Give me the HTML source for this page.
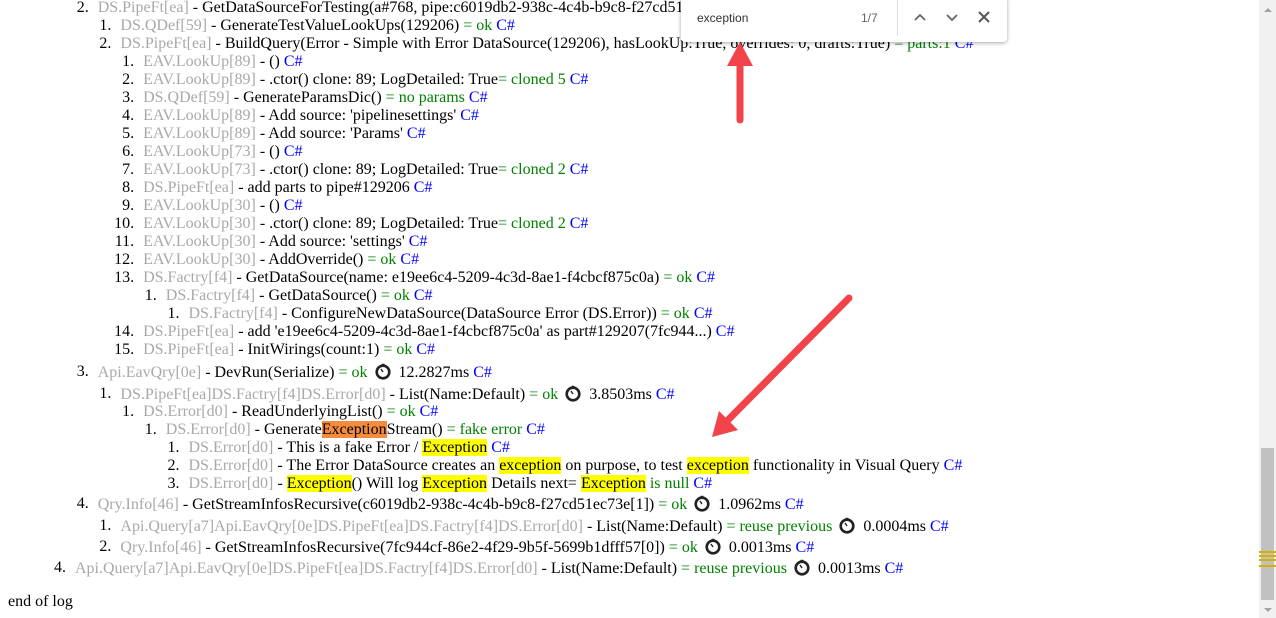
<!DOCTYPE html>
<html><head><meta charset="utf-8"><style>
body{margin:0;width:1276px;height:618px;overflow:hidden;background:#fff;font-family:"Liberation Serif",serif;font-size:16px;color:#000;position:relative}
.l{position:absolute;white-space:nowrap;line-height:18px;height:18px}
.n{position:absolute;width:30px;text-align:right}
.g{color:#a9a9a9}.k{color:#008000}.c{color:#0000ff}
.y{background:#ffff00}.o{background:#f58b3c}
.clk{display:inline-block;vertical-align:-3px;margin:0 4px 0 3px}
</style></head><body>
<svg width="0" height="0" style="position:absolute"><defs><symbol id="ck" viewBox="0 0 16 16"><circle cx="8" cy="8.5" r="6.3" fill="#fff" stroke="#222" stroke-width="2.6"/><rect x="6.5" y="0.3" width="3" height="2" fill="#222"/><path d="M8 8.5 L6 5.5" stroke="#222" stroke-width="1.4"/></symbol></defs></svg>
<div id="c"></div>
<script>
const L=[
[7,1,2,'<span class="g">DS.PipeFt[ea]</span> - GetDataSourceForTesting(a#768, pipe:c6019db2-938c-4c4b-b9c8-f27cd51ec73e)'],
[25,2,1,'<span class="g">DS.QDef[59]</span> - GenerateTestValueLookUps(129206) <span class="k">= ok</span> <span class="c">C#</span>'],
[43,2,2,'<span class="g">DS.PipeFt[ea]</span> - BuildQuery(Error - Simple with Error DataSource(129206), hasLookUp:True, overrides: 0, drafts:True) <span class="k">= parts:1</span> <span class="c">C#</span>'],
[61,3,1,'<span class="g">EAV.LookUp[89]</span> - () <span class="c">C#</span>'],
[79,3,2,'<span class="g">EAV.LookUp[89]</span> - .ctor() clone: 89; LogDetailed: True<span class="k">= cloned 5</span> <span class="c">C#</span>'],
[97,3,3,'<span class="g">DS.QDef[59]</span> - GenerateParamsDic() <span class="k">= no params</span> <span class="c">C#</span>'],
[115,3,4,'<span class="g">EAV.LookUp[89]</span> - Add source: \'pipelinesettings\' <span class="c">C#</span>'],
[133,3,5,'<span class="g">EAV.LookUp[89]</span> - Add source: \'Params\' <span class="c">C#</span>'],
[151,3,6,'<span class="g">EAV.LookUp[73]</span> - () <span class="c">C#</span>'],
[169,3,7,'<span class="g">EAV.LookUp[73]</span> - .ctor() clone: 89; LogDetailed: True<span class="k">= cloned 2</span> <span class="c">C#</span>'],
[187,3,8,'<span class="g">DS.PipeFt[ea]</span> - add parts to pipe#129206 <span class="c">C#</span>'],
[205,3,9,'<span class="g">EAV.LookUp[30]</span> - () <span class="c">C#</span>'],
[223,3,10,'<span class="g">EAV.LookUp[30]</span> - .ctor() clone: 89; LogDetailed: True<span class="k">= cloned 2</span> <span class="c">C#</span>'],
[241,3,11,'<span class="g">EAV.LookUp[30]</span> - Add source: \'settings\' <span class="c">C#</span>'],
[259,3,12,'<span class="g">EAV.LookUp[30]</span> - AddOverride() <span class="k">= ok</span> <span class="c">C#</span>'],
[277,3,13,'<span class="g">DS.Factry[f4]</span> - GetDataSource(name: e19ee6c4-5209-4c3d-8ae1-f4cbcf875c0a) <span class="k">= ok</span> <span class="c">C#</span>'],
[295,4,1,'<span class="g">DS.Factry[f4]</span> - GetDataSource() <span class="k">= ok</span> <span class="c">C#</span>'],
[313,5,1,'<span class="g">DS.Factry[f4]</span> - ConfigureNewDataSource(DataSource Error (DS.Error)) <span class="k">= ok</span> <span class="c">C#</span>'],
[331,3,14,'<span class="g">DS.PipeFt[ea]</span> - add \'e19ee6c4-5209-4c3d-8ae1-f4cbcf875c0a\' as part#129207(7fc944...) <span class="c">C#</span>'],
[349,3,15,'<span class="g">DS.PipeFt[ea]</span> - InitWirings(count:1) <span class="k">= ok</span> <span class="c">C#</span>'],
[371,1,3,'<span class="g">Api.EavQry[0e]</span> - DevRun(Serialize) <span class="k">= ok</span> CLK 12.2827ms <span class="c">C#</span>'],
[393,2,1,'<span class="g">DS.PipeFt[ea]DS.Factry[f4]DS.Error[d0]</span> - List(Name:Default) <span class="k">= ok</span> CLK 3.8503ms <span class="c">C#</span>'],
[411,3,1,'<span class="g">DS.Error[d0]</span> - ReadUnderlyingList() <span class="k">= ok</span> <span class="c">C#</span>'],
[429,4,1,'<span class="g">DS.Error[d0]</span> - Generate<span class="o">Exception</span>Stream() <span class="k">= fake error</span> <span class="c">C#</span>'],
[447,5,1,'<span class="g">DS.Error[d0]</span> - This is a fake Error / <span class="y">Exception</span> <span class="c">C#</span>'],
[465,5,2,'<span class="g">DS.Error[d0]</span> - The Error DataSource creates an <span class="y">exception</span> on purpose, to test <span class="y">exception</span> functionality in Visual Query <span class="c">C#</span>'],
[483,5,3,'<span class="g">DS.Error[d0]</span> - <span class="y">Exception</span>() Will log <span class="y">Exception</span> Details next= <span class="y">Exception</span> <span class="k">is null</span> <span class="c">C#</span>'],
[503,1,4,'<span class="g">Qry.Info[46]</span> - GetStreamInfosRecursive(c6019db2-938c-4c4b-b9c8-f27cd51ec73e[1]) <span class="k">= ok</span> CLK 1.0962ms <span class="c">C#</span>'],
[525,2,1,'<span class="g">Api.Query[a7]Api.EavQry[0e]DS.PipeFt[ea]DS.Factry[f4]DS.Error[d0]</span> - List(Name:Default) <span class="k">= reuse previous</span> CLK 0.0004ms <span class="c">C#</span>'],
[546,2,2,'<span class="g">Qry.Info[46]</span> - GetStreamInfosRecursive(7fc944cf-86e2-4f29-9b5f-5699b1dfff57[0]) <span class="k">= ok</span> CLK 0.0013ms <span class="c">C#</span>'],
[567,0,4,'<span class="g">Api.Query[a7]Api.EavQry[0e]DS.PipeFt[ea]DS.Factry[f4]DS.Error[d0]</span> - List(Name:Default) <span class="k">= reuse previous</span> CLK 0.0013ms <span class="c">C#</span>']
];
let h='';
for(const [y,d,n,t] of L){const x=75+23*d-0.3*d;
h+=`<div class="n l" style="top:${y-8}px;left:${x-39}px">${n}.</div><div class="l" style="top:${y-8}px;left:${x}px">${t.replace(/CLK/g,'<svg class="clk" width="16" height="17"><use href="#ck"/></svg>')}</div>`;}
h+='<div class="l" style="top:593px;left:8px">end of log</div>';
document.getElementById('c').innerHTML=h;
</script>
<div style="position:absolute;left:1259px;top:0;width:17px;height:618px;background:#f1f1f1"></div>
<div style="position:absolute;left:1264px;top:8px;width:0;height:0;border-left:4px solid transparent;border-right:4px solid transparent;border-bottom:4px solid #a3a3a3"></div>
<div style="position:absolute;left:1264px;top:608px;width:0;height:0;border-left:4px solid transparent;border-right:4px solid transparent;border-top:4px solid #a3a3a3"></div>
<div style="position:absolute;left:1261px;top:448px;width:13px;height:152px;background:#c1c1c1"></div>
<div style="position:absolute;left:1259px;top:551px;width:17px;height:2px;background:#d4b000"></div>
<div style="position:absolute;left:1259px;top:555px;width:17px;height:2px;background:#d4b000"></div>
<div style="position:absolute;left:1259px;top:559px;width:17px;height:2px;background:#d4b000"></div>
<div style="position:absolute;left:1259px;top:565px;width:17px;height:2px;background:#d4b000"></div>
<div style="position:absolute;left:681px;top:-4px;width:326px;height:46px;background:#fff;border-radius:4px;box-shadow:0 1px 4px rgba(0,0,0,.35);font-family:'Liberation Sans',sans-serif;font-size:12px;color:#333">
<span style="position:absolute;left:16px;top:15px">exception</span>
<span style="position:absolute;left:180px;top:15px;color:#666">1/7</span>
<div style="position:absolute;left:216px;top:4px;width:1px;height:36px;background:#ddd"></div>
<svg style="position:absolute;left:232px;top:14px" width="14" height="14"><path d="M2 10 L7 5 L12 10" stroke="#666" stroke-width="1.8" fill="none"/></svg>
<svg style="position:absolute;left:264px;top:14px" width="14" height="14"><path d="M2 5 L7 10 L12 5" stroke="#666" stroke-width="1.8" fill="none"/></svg>
<svg style="position:absolute;left:296px;top:14px" width="14" height="14"><path d="M2 2 L12 12 M12 2 L2 12" stroke="#555" stroke-width="2" fill="none"/></svg>
</div>
<svg style="position:absolute;left:0;top:0" width="1276" height="618">
<g stroke="#f2434a" stroke-width="7" stroke-linecap="round" fill="#f2434a">
<line x1="740" y1="120" x2="740" y2="62"/>
<line x1="849" y1="298" x2="728" y2="420"/>
</g>
<polygon points="740,42 727,66 753,66" fill="#f2434a"/>
<polygon points="712,437 719,411 738,430" fill="#f2434a"/>
</svg>
</body></html>
